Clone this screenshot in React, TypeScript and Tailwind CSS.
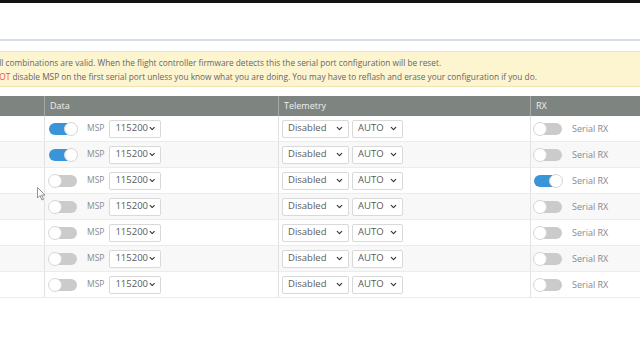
import { ChevronDown } from 'lucide-react'

const rows = [
  { msp: true, rx: false },
  { msp: true, rx: false },
  { msp: false, rx: true },
  { msp: false, rx: false },
  { msp: false, rx: false },
  { msp: false, rx: false },
  { msp: false, rx: false },
]

function Toggle({ on }: { on: boolean }) {
  return (
    <div
      className={`relative h-[12px] w-[28px] shrink-0 rounded-full ${on ? 'bg-[#3a95d8]' : 'bg-[#cbcbcb]'}`}
    >
      <div
        className={`absolute top-[-1px] h-[14px] w-[14px] rounded-full border border-[#d6d6d6] bg-white ${on ? 'right-[-1px]' : 'left-[-1px]'}`}
      />
    </div>
  )
}

function Select({ label, width }: { label: string; width: string }) {
  return (
    <div
      className={`flex h-[18px] items-center justify-between rounded-[2px] border border-[#d9d9d9] bg-white pl-[5px] pr-[4px] text-[9.5px] text-[#5a5a5a] ${width}`}
    >
      <span>{label}</span>
      <ChevronDown size={9} strokeWidth={3} className="text-[#333]" />
    </div>
  )
}

export default function App() {
  return (
    <div className="relative h-[360px] w-[640px] overflow-hidden bg-white font-['Open_Sans',sans-serif]">
      <div className="h-[3px] bg-[#111]" />
      <div className="h-[38px] border-b-[2px] border-[#d5dce4] bg-white" />

      <div className="mt-[10px] h-[36px] overflow-hidden border-y border-[#efe5b3] bg-[#fcf5d0] pt-[4px] text-[8.3px] leading-[14px] text-[#666]">
        <p className="ml-[-6px] whitespace-nowrap">
          All combinations are valid. When the flight controller firmware detects this the serial port configuration will be reset.
        </p>
        <p className="ml-[-7px] whitespace-nowrap">
          <span className="text-[#e2553b]">NOT</span> disable MSP on the first serial port unless you know what you are doing. You may have to reflash and erase your configuration if you do.
        </p>
      </div>

      <div className="mt-[9px]">
        <div className="grid h-[20px] grid-cols-[44px_234px_252px_110px] bg-[#7e8580] text-[9px] leading-[20px] text-[#eef0ee]">
          <div />
          <div className="border-l border-[#a5aaa6] pl-[5px]">Data</div>
          <div className="border-l border-[#a5aaa6] pl-[5px]">Telemetry</div>
          <div className="border-l border-[#a5aaa6] pl-[5px]">RX</div>
        </div>

        {rows.map((r, i) => (
          <div
            key={i}
            className={`grid h-[26px] grid-cols-[44px_234px_252px_110px] border-b border-[#ececec] ${i % 2 === 1 ? 'bg-[#f8f8f8]' : 'bg-white'}`}
          >
            <div />
            <div className="flex items-center border-l border-[#e2e2e2] pl-[4px]">
              <Toggle on={r.msp} />
              <span className="ml-[10px] mr-[5px] text-[8.5px] text-[#8a8a8a]">MSP</span>
              <Select label="115200" width="w-[52px]" />
            </div>
            <div className="flex items-center gap-[3px] border-l border-[#e2e2e2] pl-[3px]">
              <Select label="Disabled" width="w-[67px]" />
              <Select label="AUTO" width="w-[51px]" />
            </div>
            <div className="flex items-center border-l border-[#e2e2e2] pl-[3px]">
              <Toggle on={r.rx} />
              <span className="ml-[10px] text-[9px] text-[#8a8a8a]">Serial RX</span>
            </div>
          </div>
        ))}
      </div>

      <svg className="absolute left-[37px] top-[187px]" width="9" height="14" viewBox="0 0 9 14">
        <path d="M0.5 0.5 L0.5 11 L3 8.5 L5 13 L6.5 12.3 L4.6 8 L8 8 Z" fill="white" stroke="#777" strokeWidth="0.8" />
      </svg>
    </div>
  )
}
